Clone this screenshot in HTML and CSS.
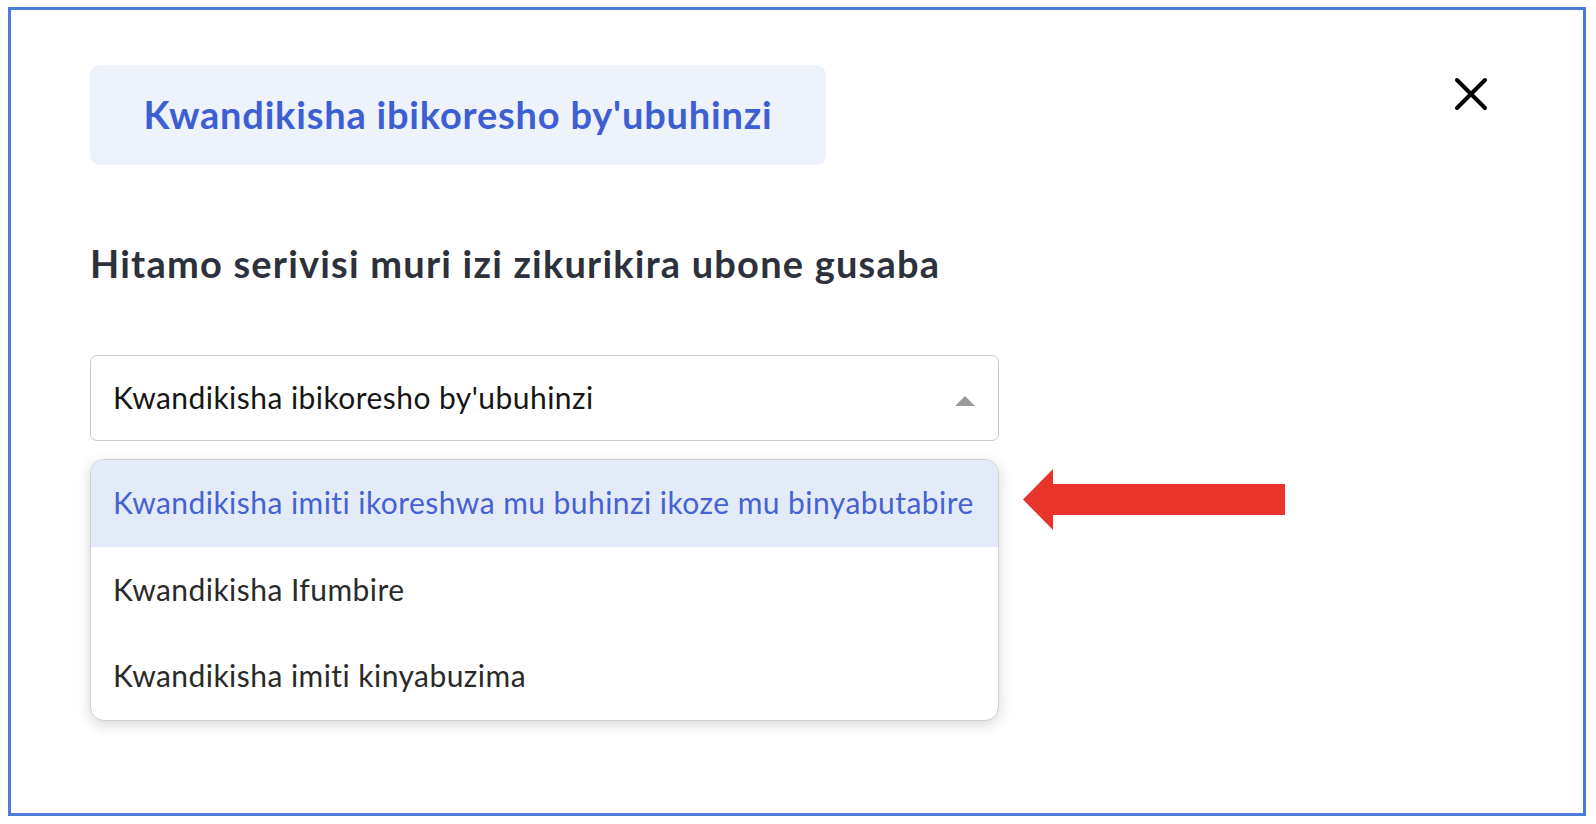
FILE: index.html
```html
<!DOCTYPE html>
<html lang="rw">
<head>
<meta charset="utf-8">
<title>Kwandikisha ibikoresho by'ubuhinzi</title>
<link rel="stylesheet" href="styles.css">
</head>
<body>
<div class="frame">
  <div class="header">
    <div class="title-box">Kwandikisha ibikoresho by'ubuhinzi</div>
    <button class="close" aria-label="Close">
      <svg width="34" height="34" viewBox="0 0 34 34"><path d="M3 3 L31 31 M31 3 L3 31" stroke="#000" stroke-width="4" stroke-linecap="round" fill="none"/></svg>
    </button>
  </div>
  <h2 class="heading">Hitamo serivisi muri izi zikurikira ubone gusaba</h2>
  <div class="select">
    <span class="select-value">Kwandikisha ibikoresho by'ubuhinzi</span>
    <span class="caret"></span>
  </div>
  <ul class="menu">
    <li class="item active">Kwandikisha imiti ikoreshwa mu buhinzi ikoze mu binyabutabire</li>
    <li class="item">Kwandikisha Ifumbire</li>
    <li class="item">Kwandikisha imiti kinyabuzima</li>
  </ul>
  <svg class="arrow" width="262" height="61" viewBox="0 0 262 61"><polygon points="0,30.5 30,0 30,15 262,15 262,46 30,46 30,61" fill="#e8342a"/></svg>
</div>
</body>
</html>
```

FILE: styles.css
```css
* { box-sizing: border-box; }
html, body { margin: 0; padding: 0; background: #fff; }
body {
  font-family: Lato, "Noto Sans", "Liberation Sans", sans-serif;
  font-variant-ligatures: none;
}

.frame {
  position: relative;
  margin: 7px 0 0 8px;
  width: 1578px;
  height: 809px;
  border: 3px solid #4e7bd7;
  padding: 55px 95px 0 79px;
}

.header {
  display: flex;
  justify-content: space-between;
  align-items: flex-start;
}

.title-box {
  width: 736px;
  height: 100px;
  background: #eef2fb;
  border-radius: 10px;
  display: flex;
  align-items: center;
  justify-content: center;
  color: #3e5fd4;
  font-weight: 700;
  font-size: 38px;
  letter-spacing: 0.8px;
  padding-bottom: 2px;
}

.close {
  margin-top: 12px;
  padding: 0;
  border: 0;
  background: none;
  width: 34px;
  height: 34px;
  display: block;
}
.close svg { display: block; }

.heading {
  margin: 76px 0 0;
  font-size: 38px;
  line-height: 44px;
  font-weight: 700;
  letter-spacing: 1.2px;
  color: #2c313b;
}

.select {
  margin-top: 70px;
  width: 909px;
  height: 86px;
  border: 1px solid #c9c9c9;
  border-radius: 7px;
  display: flex;
  align-items: center;
  justify-content: space-between;
  padding: 0 23px 3px 22px;
  font-size: 30px;
  letter-spacing: 0.45px;
  color: #161616;
}

.caret {
  width: 0;
  height: 0;
  border-left: 10.5px solid transparent;
  border-right: 10.5px solid transparent;
  border-bottom: 10px solid #9b9b9b;
  margin-top: 9px;
}

.menu {
  list-style: none;
  margin: 18px 0 0;
  padding: 0;
  width: 909px;
  border: 1px solid #cfcfcf;
  border-radius: 14px;
  overflow: hidden;
  box-shadow: 0 4px 14px rgba(0, 0, 0, 0.16);
  background: #fff;
}

.item {
  height: 87px;
  display: flex;
  align-items: center;
  padding: 0 0 3px 22px;
  font-size: 30px;
  letter-spacing: 0.45px;
  color: #2a2a2a;
}
.item:last-child { height: 86px; padding-bottom: 5px; }

.item.active {
  background: #e4ebf8;
  color: #4462d3;
}

.arrow {
  position: absolute;
  left: 1012px;
  top: 459px;
}
```
